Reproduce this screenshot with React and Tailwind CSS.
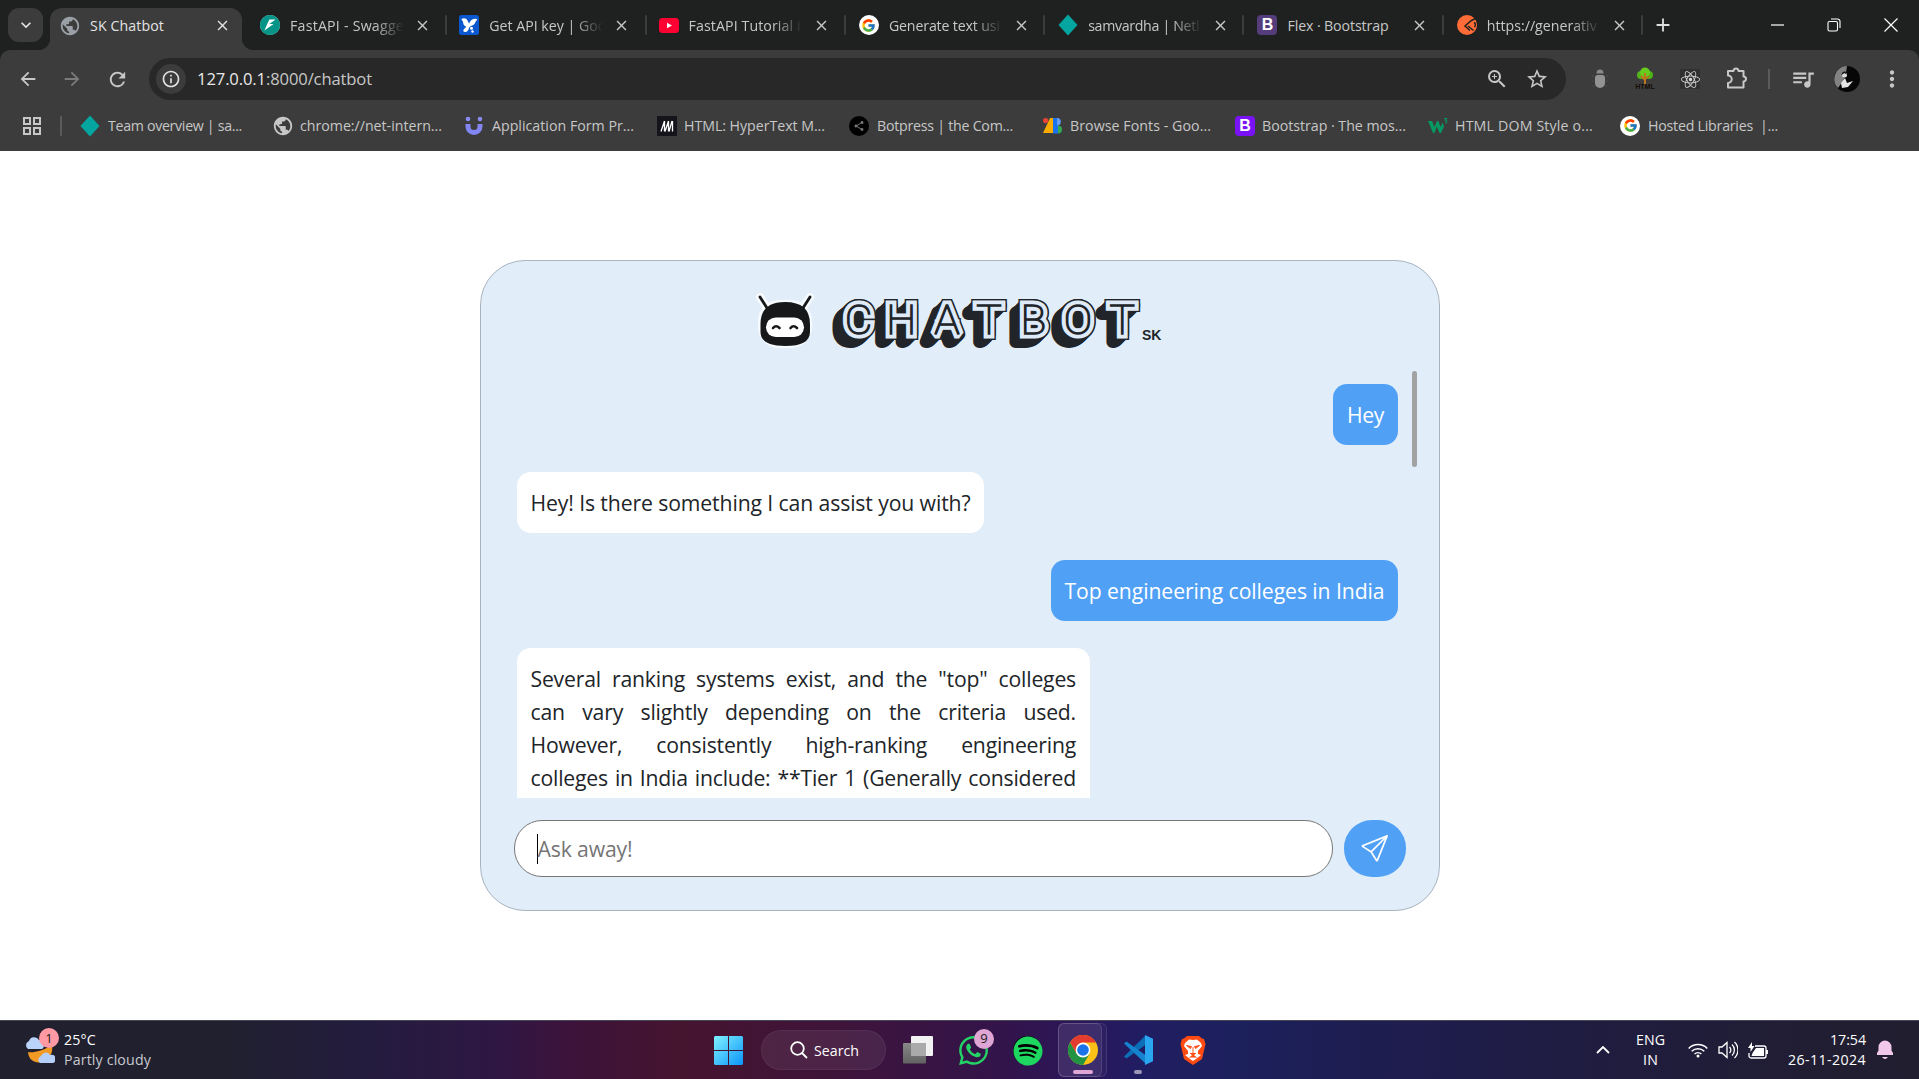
import React, { useLayoutEffect, useRef, useState } from "react";
import {
  MdPublic, MdZoomIn, MdStarBorder, MdInfoOutline, MdQueueMusic,
  MdMoreVert, MdArrowBack, MdArrowForward, MdRefresh, MdClose, MdAdd, MdKeyboardArrowDown, MdShare,
} from "react-icons/md";
import { FcGoogle } from "react-icons/fc";
import { FaReact, FaWhatsapp, FaSpotify } from "react-icons/fa";
import { SiFastapi } from "react-icons/si";
import { BsSend } from "react-icons/bs";

/* Single-line label whose tracking is adjusted so that it spans `w` pixels. */
function Label({ w, className = "", children }) {
  const ref = useRef(null);
  const [tracking, setTracking] = useState(0);
  useLayoutEffect(() => {
    const natural = ref.current.getBoundingClientRect().width;
    setTracking((w - natural) / children.length);
  }, [w, children]);
  return (
    <span ref={ref} style={{ letterSpacing: tracking }} className={`inline-block whitespace-nowrap ${className}`}>
      {children}
    </span>
  );
}

const Netlify = () => (
  <svg viewBox="0 0 20 24" className="h-[24px] w-5"><path d="M10 1.500 19.500 12 10 22.500.5 12Z" fill="#05a5a0" /></svg>
);
const Google = () => (
  <span className="grid h-5 w-5 place-items-center rounded-full bg-white"><FcGoogle size={15} /></span>
);
const Boot = ({ className }) => (
  <span className={`grid h-5 w-5 place-items-center rounded-[4px] font-['Liberation_Sans'] text-[16px] font-bold leading-none text-white ${className}`}>B</span>
);
const FastApi = () => (
  <span className="grid h-5 w-5 place-items-center rounded-full bg-white"><SiFastapi size={20} color="#059487" /></span>
);
const Postman = () => (
  <svg viewBox="0 0 20 20" className="h-5 w-5">
    <circle cx="10" cy="10" r="10" fill="#ff6c37" />
    <path d="M18.500 3.500 14.500 5.500 8 11l5 4.500M11 11l5.500 4.500M17 7.500q2.500 1.500.5 4.500" fill="none" stroke="#20211f" strokeWidth="1.500" />
  </svg>
);
const Studio = () => (
  <svg viewBox="0 0 20 20" className="h-5 w-5">
    <rect width="20" height="20" rx="2.5" fill="#0b57d0" />
    <path d="M2.500 4C5 2.500 7.500 3.500 8.500 5.500c.7 1.300 1 2.500 1.700 3 1-3 3.300-5.500 7.300-4.500 1.300.4.500 1.200-.2 1.800-1 1-1 2.700-2.300 3.700-1.500 1.200-3.500 1-4.500 2.500-.8 1.500-1 4.500-4 5-2 .3-2.700-1.200-1.800-2.500.7-1 2-1.500 2.300-3C5.500 11 4 9.500 4.200 7.500 4.300 6 2 5 2.500 4Z" fill="#fff" />
    <circle cx="12.500" cy="13.300" r="1.500" fill="#fff" /><circle cx="13.500" cy="16.500" r="1.200" fill="#fff" />
  </svg>
);
const YouTube = () => (
  <svg viewBox="0 0 20 15" className="h-[15px] w-5">
    <rect width="20" height="15" rx="3.500" fill="#ff0033" /><path d="M8 4.700v5.600l5-2.800Z" fill="#fff" />
  </svg>
);
const FormU = () => (
  <svg viewBox="0 0 18 20" className="h-5 w-[18px]">
    <circle cx="3" cy="3" r="2.300" fill="#8a8af5" /><circle cx="15" cy="3" r="2.300" fill="#8a8af5" />
    <path d="M3 8v2.500a6 6 0 0 0 12 0V8" fill="none" stroke="#8186f3" strokeWidth="5" />
  </svg>
);
const Mdn = () => (
  <svg viewBox="0 0 20 20" className="h-5 w-5">
    <rect width="20" height="20" fill="#15141a" />
    <path d="M4 15.500 7.500 5M8 15.500 11.500 5M12 15.500 15 5M7.500 5v10.500M11.500 5v10.500M15.500 5v10.500" fill="none" stroke="#fff" strokeWidth="1.300" />
  </svg>
);
const Botpress = () => (
  <span className="grid h-5 w-5 place-items-center rounded-full bg-black"><MdShare size={12} color="#777" /></span>
);
const Fonts = () => (
  <svg viewBox="0 0 20 16" className="h-4 w-5">
    <path d="M7 0h5v15H0Z" fill="#f9ab00" /><circle cx="2.600" cy="2.600" r="2.600" fill="#ea4335" />
    <path d="M10 0h5a4 4 0 0 1 0 7.500v8h-5Z" fill="#1a73e8" /><path d="M15 7.500a4 4 0 0 1 0 8Z" fill="#34a853" />
    <path d="M14 0a3.700 3.700 0 0 1 0 7.500Z" fill="#669df6" />
  </svg>
);
const W3 = () => (
  <svg viewBox="0 0 20 18" className="h-[18px] w-5">
    <path d="M0 4h4l2.500 6L9 4h1.500l2 6 2-4.500 1.500 4L13 16h-1.500L8.800 9.500 6.500 16H5Z" fill="#059862" />
    <path d="M16 1.500h2.500L17.300 3.300c2 0 1.900 2.800-.2 2.800" fill="none" stroke="#059862" strokeWidth="1.100" />
  </svg>
);
const Puzzle = ({ className }) => (
  <svg viewBox="0 0 22 24" className={`h-6 w-[22px] ${className}`} fill="none" stroke="currentColor" strokeWidth="2" strokeLinejoin="round">
    <path d="M2 5h5.500a2.500 2.500 0 0 1 5 0H17.500v5.500a2.500 2.500 0 0 1 0 5V21.500H2V17a3.500 3.500 0 0 0 0-7.500Z" />
  </svg>
);

const tabs = [
  ["FastAPI - Swagge", 114, FastApi],
  ["Get API key | Goo", 117, Studio],
  ["FastAPI Tutorial i", 112, YouTube],
  ["Generate text usi", 111, Google],
  ["samvardha | Netl", 111, Netlify],
  ["Flex · Bootstrap", 101, () => <Boot className="bg-[#553c7b]" />],
  ["https://generativ", 110, Postman],
];

const Globe = ({ className }) => <MdPublic size={22} className={`-m-[1px] ${className}`} />;

function TabStrip() {
  return (
    <div className="flex h-[50px] bg-[#1f2120] text-[14.2px]">
      <div className="ml-2 mt-2 grid h-[34px] w-[35px] place-items-center rounded-[11px] bg-[#3c3c3c]">
        <MdKeyboardArrowDown size={20} color="#e3e3e3" />
      </div>
      <div className="relative ml-[7px] mr-1.5 mt-2 flex h-[42px] w-[192px] items-center rounded-t-[12px] bg-[#3c3c3c] pl-[10px] text-[#e3e3e3]">
        <span className="absolute bottom-0 -left-3 h-3 w-3 bg-[radial-gradient(circle_at_0_0,transparent_12px,#3c3c3c_12.5px)]" />
        <span className="absolute bottom-0 -right-3 h-3 w-3 bg-[radial-gradient(circle_at_100%_0,transparent_12px,#3c3c3c_12.5px)]" />
        <Globe className="-mt-[8px] text-[#9aa0a6]" />
        <div className="-mt-[7px] ml-[10px] w-[112px]"><Label w={74}>SK Chatbot</Label></div>
        <MdClose size={17} className="-mt-[8px] ml-[12px]" />
      </div>
      {tabs.map(([name, w, Icon], i) => (
        <div key={name} className={`flex h-[50px] w-[199.3px] items-center text-[#c7c7c7] ${i < 3 ? "pl-3" : "pl-[13px]"}`}>
          <Icon />
          <div className={i === 5 ? "ml-[10px] w-[116px] pt-px" : "ml-[10px] w-[116px] pt-px [mask-image:linear-gradient(to_right,#000_84px,transparent_114px)]"}>
            <Label w={w}>{name}</Label>
          </div>
          <MdClose size={17} className="ml-[8px]" />
          <span className="ml-auto h-[20px] w-[2px] rounded bg-[#3c3c3c]" />
        </div>
      ))}
      <div className="flex flex-1 items-center text-[#dedede]">
        <MdAdd size={22} className="ml-[9px]" />
        <svg viewBox="0 0 14 14" className="ml-[97px] h-[14px] w-[14px]" stroke="#fff" strokeWidth="1.200"><path d="M0 7h13" /></svg>
        <svg viewBox="0 0 14 14" className="ml-[42px] h-[14px] w-[14px]" fill="none" stroke="#fff" strokeWidth="1.100">
          <rect x="1" y="3.500" width="9.500" height="9.500" rx="1.500" /><path d="M4 1h6.500a2.500 2.500 0 0 1 2.500 2.500V10" />
        </svg>
        <svg viewBox="0 0 14 14" className="ml-[43px] h-[14px] w-[14px]" stroke="#fff" strokeWidth="1.200"><path d="m.5.5 13 13m0-13-13 13" /></svg>
      </div>
    </div>
  );
}

function Toolbar() {
  return (
    <div className="bg-[#1f2120]">
      <div className="flex h-[58px] items-center rounded-t-[10px] bg-[#3c3c3c] text-[#c7c7c7]">
        <MdArrowBack size={22} className="ml-[17px]" />
        <MdArrowForward size={22} className="ml-[22px] text-[#7b7b7b]" />
        <MdRefresh size={23} className="ml-[23px]" />
        <div className="ml-[20px] flex h-[42px] w-[1417px] items-center rounded-full bg-[#282828] text-[16.600px]">
          <span className="ml-[7px] grid h-[30px] w-[30px] place-items-center rounded-full bg-[#3c3c3c]">
            <MdInfoOutline size={20} color="#e3e3e3" />
          </span>
          <div className="ml-[11px] pt-px text-[#c7c7c7]">
            <Label w={69} className="text-[#e8e8e8]">127.0.0.1</Label><Label w={106}>:8000/chatbot</Label>
          </div>
          <MdZoomIn size={24} className="ml-auto" />
          <MdStarBorder size={24} className="ml-4 mr-[17px]" />
        </div>
        <svg viewBox="0 0 16 22" className="ml-[26px] h-[22px] w-4">
          <path d="M4.500 5.500a3.500 4 0 0 1 7 0Z" fill="#888" />
          <path d="M3 10q0-3 3-3h4q3 0 3 3v5a5 5 0 0 1-10 0Z" fill="#939393" />
          <path d="M0 8h2M0 13h2M1 19l2-2M14 8h2M14 13h2M15 19l-2-2" stroke="#4c4c4c" strokeWidth="1" />
        </svg>
        <div className="ml-[27px] flex w-5 flex-col items-center">
          <svg viewBox="0 0 20 18" className="h-[18px] w-5">
            <circle cx="6" cy="8" r="4" fill="#52b51b" /><circle cx="14" cy="8" r="4" fill="#4fb016" /><circle cx="10" cy="5.500" r="5" fill="#68cc1f" />
            <path d="M10 18V6M10 12l4-3M10 13 6 9" stroke="#b9761d" strokeWidth="2" />
          </svg>
          <span className="-mt-[2px] font-['Liberation_Sans'] text-[7px] font-bold leading-[8px] text-[#160d05]">HTML</span>
        </div>
        <span className="ml-[25px] grid h-5 w-5 place-items-center bg-[#303030]"><FaReact size={19} color="#d8d8d8" /></span>
        <Puzzle className="-mt-[2px] ml-[26px]" />
        <span className="ml-[20px] h-5 w-[2px] bg-[#5b5b5b]" />
        <MdQueueMusic size={26} className="ml-[20px]" />
        <svg viewBox="0 0 26 26" className="ml-[18px] h-[26px] w-[26px]">
          <circle cx="13" cy="13" r="13" fill="#070707" /><path d="M13 0a13 13 0 0 0-9 22l5-7 3-8Z" fill="#828282" />
          <circle cx="10.500" cy="9" r="2.500" fill="#ddd" /><path d="m7 17 4-5 2 5 6-2-5 6-6 1Z" fill="#e5e5e5" />
          <path d="M7.500 9q.5-4 4-3.500l1 3-2-1.500Z" fill="#111" />
        </svg>
        <MdMoreVert size={26} className="ml-[19px]" />
      </div>
    </div>
  );
}

const bookmarks = [
  ["Team overview | sa...", 134, Netlify, "ml-[18px] mr-[8px]"],
  ["chrome://net-intern...", 142, () => <Globe className="text-[#c7c7c7]" />, "ml-[31px] mr-[7px]"],
  ["Application Form Pr...", 142, FormU, "ml-[23px] mr-[9px]"],
  ["HTML: HyperText M...", 141, Mdn, "ml-[23px] mr-[7px]"],
  ["Botpress | the Com...", 136, Botpress, "ml-[24px] mr-[8px]"],
  ["Browse Fonts - Goo...", 141, Fonts, "ml-[30px] mr-[7px]"],
  ["Bootstrap · The mos...", 144, () => <Boot className="bg-[#7a12f8]" />, "ml-[24px] mr-[7px]"],
  ["HTML DOM Style o...", 138, W3, "ml-[22px] mr-[7px]"],
  ["Hosted Libraries  |...", 130, Google, "ml-[27px] mr-[8px]"],
];

function Bookmarks() {
  return (
    <div className="flex h-[43px] items-center bg-[#3c3c3c] pb-[8px] text-[14.2px] text-[#c7c7c7]">
      <svg viewBox="0 0 18 18" className="ml-[23px] h-[18px] w-[18px]" fill="none" stroke="#c7c7c7" strokeWidth="2">
        <path d="M1 1h6v6H1ZM11 1h6v6h-6ZM1 11h6v6H1ZM11 11h6v6h-6Z" />
      </svg>
      <span className="ml-[19px] h-5 w-[2px] rounded bg-[#5b5b5b]" />
      {bookmarks.map(([name, w, Icon, gap]) => (
        <React.Fragment key={name}>
          <span className={`${gap} grid place-items-center`}><Icon /></span>
          <Label w={w} className="whitespace-pre">{name}</Label>
        </React.Fragment>
      ))}
    </div>
  );
}

/* Bevelled word mark: one text node, stroked at several widths. */
const extrusion = [9, 8, 7, 6, 5, 4, 3, 2, 1];
function Logo() {
  return (
    <svg viewBox="740 280 440 76" className="mx-auto block h-[76px] w-[440px]">
      <g strokeLinecap="round">
        <g stroke="#f6fbff" fill="#f6fbff">
          <path d="m760 297 8 12m42-12-8 12" strokeWidth="8" /><rect x="758.500" y="300.500" width="53" height="47" rx="20" />
        </g>
        <path d="M760.500 324q0-22 24.700-22T810 324v8q0 14-24.800 14t-24.700-14Z" fill="#17181a" />
        <path d="m760 297 7 11m43-11-7 11" stroke="#17181a" strokeWidth="2.800" />
        <rect x="766" y="317.500" width="38" height="19.500" rx="9.700" fill="#fff" />
        <path d="M773 328q3-3.500 6.500 0M790.500 328q3-3.500 6.500 0" fill="none" stroke="#17181a" strokeWidth="2.600" />
      </g>
      <g strokeMiterlimit="1.600" className="font-['Roboto']" fontSize="41" fontWeight="100" textAnchor="middle">
        <g stroke="#212529" strokeWidth="12" strokeLinejoin="round">
          {extrusion.map((n) => <use key={n} href="#wordmark" x={-n} y={n * 0.9} />)}
          <use href="#wordmark" />
        </g>
        <g stroke="#212529" strokeWidth="12"><use href="#wordmark" /></g>
        <g stroke="#dfeaf8" strokeWidth="9.200"><use href="#wordmark" /></g>
        <g stroke="#212529" strokeWidth="1.400" fill="#212529">
          <text id="wordmark" transform="translate(740 0) scale(1.04 1)" x="114 155 199 239.500 282 325 367.500" y="334.300">CHATBOT</text>
        </g>
      </g>
      <text x="1142" y="340" fontSize="14" fontWeight="700" fill="#212529" className="font-['Liberation_Sans']">SK</text>
    </svg>
  );
}

const answer = [
  'Several ranking systems exist, and the "top" colleges',
  "can vary slightly depending on the criteria used.",
  "However, consistently high-ranking engineering",
  "colleges in India include: **Tier 1 (Generally considered",
];

function Chat() {
  return (
    <main className="flex h-[869px] justify-center bg-white pt-[109px]">
      <section className="flex h-[651px] w-[960px] flex-col rounded-[45px] border border-[#a9b4bf] bg-[#e1edf9] pt-[19px] text-[21.200px] leading-[33px] text-[#212529]">
        <Logo />
        <div className="mt-[15px] flex h-[427px] justify-between overflow-hidden pl-9 pr-[22px]">
          <div className="flex w-[881px] flex-col items-start gap-[27px] pt-[13px]">
            <div className="self-end rounded-[14px] bg-[#50a0f6] py-[14px] pl-[14.500px] pr-[13.500px] text-white"><Label w={37}>Hey</Label></div>
            <div className="rounded-[14px] bg-white py-[14px] pl-[14px] pr-[13px]"><Label w={440}>Hey! Is there something I can assist you with?</Label></div>
            <div className="self-end rounded-[14px] bg-[#50a0f6] py-[14px] pl-[14px] pr-[13px] text-white"><Label w={320}>Top engineering colleges in India</Label></div>
            <div className="w-[573px] rounded-t-[14px] bg-white py-[14px] pl-[14px] pr-[13.500px]">
              {answer.map((line) => (
                <p key={line} className="whitespace-nowrap tracking-[-0.2px] [text-align-last:justify]">{line}</p>
              ))}
            </div>
          </div>
          <span className="h-24 w-[5px] rounded-full bg-[#a2a2a2]" />
        </div>
        <div className="ml-[33px] mt-[22px] flex gap-[11px]">
          <div className="flex h-[57px] w-[819px] items-center rounded-[28px] border border-[#767676] bg-white pl-[22px] text-[#757575]">
            <span className="h-[30px] w-px bg-black" />
            <Label w={95}>Ask away!</Label>
          </div>
          <div className="grid h-[57px] w-[62px] place-items-center rounded-[28px] bg-[#50a0f6] text-white"><BsSend size={27} /></div>
        </div>
      </section>
    </main>
  );
}

const Chrome = () => (
  <svg viewBox="-15 -15 30 30" className="h-[30px] w-[30px]">
    <circle r="15" fill="#fbc116" />
    <path d="M-13 -7.500A15 15 0 0 1 13 -7.500H0L-6.500 3.700Z" fill="#e33b2e" />
    <path d="M-13 -7.500A15 15 0 0 0 0 15L6.500 3.700H-6.500Z" fill="#229342" />
    <circle r="7.400" fill="#fff" /><circle r="5.800" fill="#1a73e8" />
  </svg>
);

function Taskbar() {
  return (
    <footer className="flex h-[59px] items-center border-t border-[#474657] bg-[linear-gradient(90deg,#20202e_0px,#20202f_230px,#241c3f_370px,#2f1743_500px,#3d133b_570px,#45142f_680px,#3f143a_830px,#33144a_1000px,#2b165a_1080px,#211d63_1140px,#1c205c_1230px,#1e1d4e_1400px,#1f1c3f_1600px,#211e31_1850px,#211e30_1919px)] text-[14.2px] text-white">
      <div className="relative ml-[25px] h-[34px] w-[30px]">
        <svg viewBox="0 0 30 34" className="h-[34px] w-[30px]">
          <path d="M27 12C18 18 8 20 3 19c1 12 13 12 18 8 5-4 7-8 6-15Z" fill="#f39a24" />
          <path d="M3 16a4.500 4.500 0 0 1 1-8 5.500 5.500 0 0 1 10-1 5 5 0 0 1 3 9Z" fill="#b9d3fb" />
          <path d="M15 30a4 4 0 0 1 1-7 5 5 0 0 1 9-1 4 4 0 0 1 3 8Z" fill="#b5cff9" />
        </svg>
        <span className="absolute -top-[5px] left-[14px] grid h-[20px] w-[20px] place-items-center rounded-full bg-[#ff99a4] text-[13px] leading-none text-[#222]">1</span>
      </div>
      <div className="ml-[9px] w-[648px] leading-[20.500px]">
        <div><Label w={32}>25°C</Label></div>
        <div className="text-[#c9c9d0]"><Label w={87}>Partly cloudy</Label></div>
      </div>
      <svg viewBox="0 0 29 29" className="ml-[2px] h-[29px] w-[29px]">
        <defs><linearGradient id="win" gradientUnits="userSpaceOnUse" x1="0" y1="0" x2="29" y2="29"><stop stopColor="#80f2ff" /><stop offset="1" stopColor="#0b94fa" /></linearGradient></defs>
        <path d="M1 0h13v14H0V1ZM15 0h13l1 1v13H15ZM0 15h14v14H1l-1-1ZM15 15h14v13l-1 1H15Z" fill="url(#win)" />
      </svg>
      <div className="ml-[18px] flex h-10 w-[125px] items-center rounded-full border border-white/5 bg-white/[0.07]">
        <svg viewBox="0 0 18 18" className="ml-[28px] h-[18px] w-[18px]" fill="none" stroke="#fff" strokeWidth="1.800"><circle cx="7.500" cy="7.500" r="6.300" /><path d="m12 12 5 5" /></svg>
        <div className="ml-[6px] pt-[1px]"><Label w={45}>Search</Label></div>
      </div>
      <svg viewBox="0 0 30 28" className="ml-[17px] h-7 w-[30px]">
        <defs><linearGradient id="tv" x2="0" y2="1"><stop stopColor="#888" /><stop offset="1" stopColor="#626262" /></linearGradient></defs>
        <rect y="7" width="23" height="20.500" rx="1" fill="url(#tv)" /><rect x="8" width="22" height="20" rx="1" fill="#f2f2f2" /><path d="M8 7h15v13H8Z" fill="#aaa" />
      </svg>
      <div className="relative ml-[24px]">
        <FaWhatsapp size={33} color="#23d366" />
        <span className="absolute -top-[5px] left-[17px] grid h-5 w-5 place-items-center rounded-full bg-[#dfa5d4] text-[13px] leading-none text-[#222]">9</span>
      </div>
      <span className="ml-[23px] grid h-[29px] w-[29px] place-items-center rounded-full bg-black"><FaSpotify size={30} color="#1ed760" /></span>
      <div className="ml-[16px] flex h-[54px] w-[49px] rounded-[6px] border border-white/10 bg-white/[0.03]">
        <div className="-ml-px -mt-px flex h-[54px] w-[44px] flex-col rounded-[6px] border border-white/10 bg-white/[0.07] pl-[9px] pt-[11px]">
          <Chrome /><span className="ml-[5px] mt-[5px] h-1 w-5 rounded-full bg-[#dfa5d4]" />
        </div>
      </div>
      <div className="ml-[16px] flex h-[54px] flex-col items-center pt-[12px]">
        <svg viewBox="0 0 30 30" className="h-[30px] w-[30px]">
          <path d="M1 21.500 3.500 23.500 23 9.500V0Z" fill="#0b6fb8" />
          <path d="M1 8.500 3.500 6.500 23 20.500v8.500Z" fill="#1583cf" />
          <path d="M22 0l8 3.700v22.600L22 30Z" fill="#2aa5f0" />
        </svg>
        <span className="mt-[5px] h-1 w-[8px] rounded-full bg-[#9b95b8]" />
      </div>
      <svg viewBox="0 0 26 30" className="ml-[27px] h-[30px] w-[26px]">
        <path d="M7 1h12l3 2.500 2 .5 1.500 5-.7 3L22 24l-9 6-9-6L1.200 12l-.7-3L2 4l2-.5Z" fill="#ff4a12" />
        <path d="m13 5 4-.5 4 3.500 1 3-4 5v3l3 1-5 4-3 2-3-2-5-4 3-1v-3l-4-5 1-3 4-3.500Z" fill="#fff" />
        <path d="m6.500 10.500 5 1-1 2ZM19.500 10.500l-5 1 1 2ZM13 12v6M10 18l3 2.500 3-2.500M9.500 22.500 13 20l3.500 2.500" fill="#ff4a12" stroke="#ff4a12" strokeWidth=".9" />
      </svg>
      <svg viewBox="0 0 14 8" className="ml-auto h-2 w-[14px]" fill="none" stroke="#fff" strokeWidth="1.800"><path d="m1 7 6-6 6 6" /></svg>
      <div className="ml-[25px] flex w-[31px] flex-col items-center leading-[20.500px]"><Label w={29}>ENG</Label><Label w={15}>IN</Label></div>
      <svg viewBox="0 0 20 16" className="ml-[22px] h-4 w-5" fill="none" stroke="#fff" strokeWidth="1.500">
        <path d="M.7 6.500a13 13 0 0 1 18.600 0M3.700 9.300a9 9 0 0 1 12.600 0M6.600 12a5 5 0 0 1 6.800 0" /><circle cx="10" cy="14" r="1.500" fill="#fff" stroke="none" />
      </svg>
      <svg viewBox="0 0 20 18" className="ml-[10px] h-[18px] w-5" fill="none" stroke="#fff" strokeWidth="1.300">
        <path d="M1 6h3l5-4.500v15L4 12H1ZM11.500 6a4 4 0 0 1 0 6M14 3.500a7.500 7.500 0 0 1 0 11M16.500 1a11 11 0 0 1 0 16" />
      </svg>
      <svg viewBox="0 0 21 17" className="ml-[10px] h-[17px] w-[21px]" fill="none" stroke="#fff" strokeWidth="1.300">
        <path d="M7 4h9a2 2 0 0 1 2 2v8a2 2 0 0 1-2 2H3a2 2 0 0 1-2-2v-3M19.300 8v4" /><path d="M8 6h8v8H3.500l1-3Z" fill="#fff" stroke="none" /><path d="m4 0-4 6h2.500v4l4-6H4Z" fill="#fff" stroke="none" />
      </svg>
      <div className="ml-[18px] flex w-[79px] flex-col items-end leading-[20.500px]"><Label w={36}>17:54</Label><Label w={78}>26-11-2024</Label></div>
      <svg viewBox="0 0 18 20" className="ml-[10px] mr-[25px] h-5 w-[18px]">
        <path d="M1 15h16v-2l-1.500-2.500V7a6.500 6.500 0 0 0-13 0v3.500L1 13Z" fill="#f2c8ea" /><path d="M6 17h6q-3 4-6 0Z" fill="#f2c8ea" />
      </svg>
    </footer>
  );
}

export default function App() {
  return (
    <div className="h-[1079px] w-[1919px] overflow-hidden bg-white font-['Open_Sans','Noto_Sans',sans-serif]">
      <TabStrip />
      <Toolbar />
      <Bookmarks />
      <Chat />
      <Taskbar />
    </div>
  );
}
